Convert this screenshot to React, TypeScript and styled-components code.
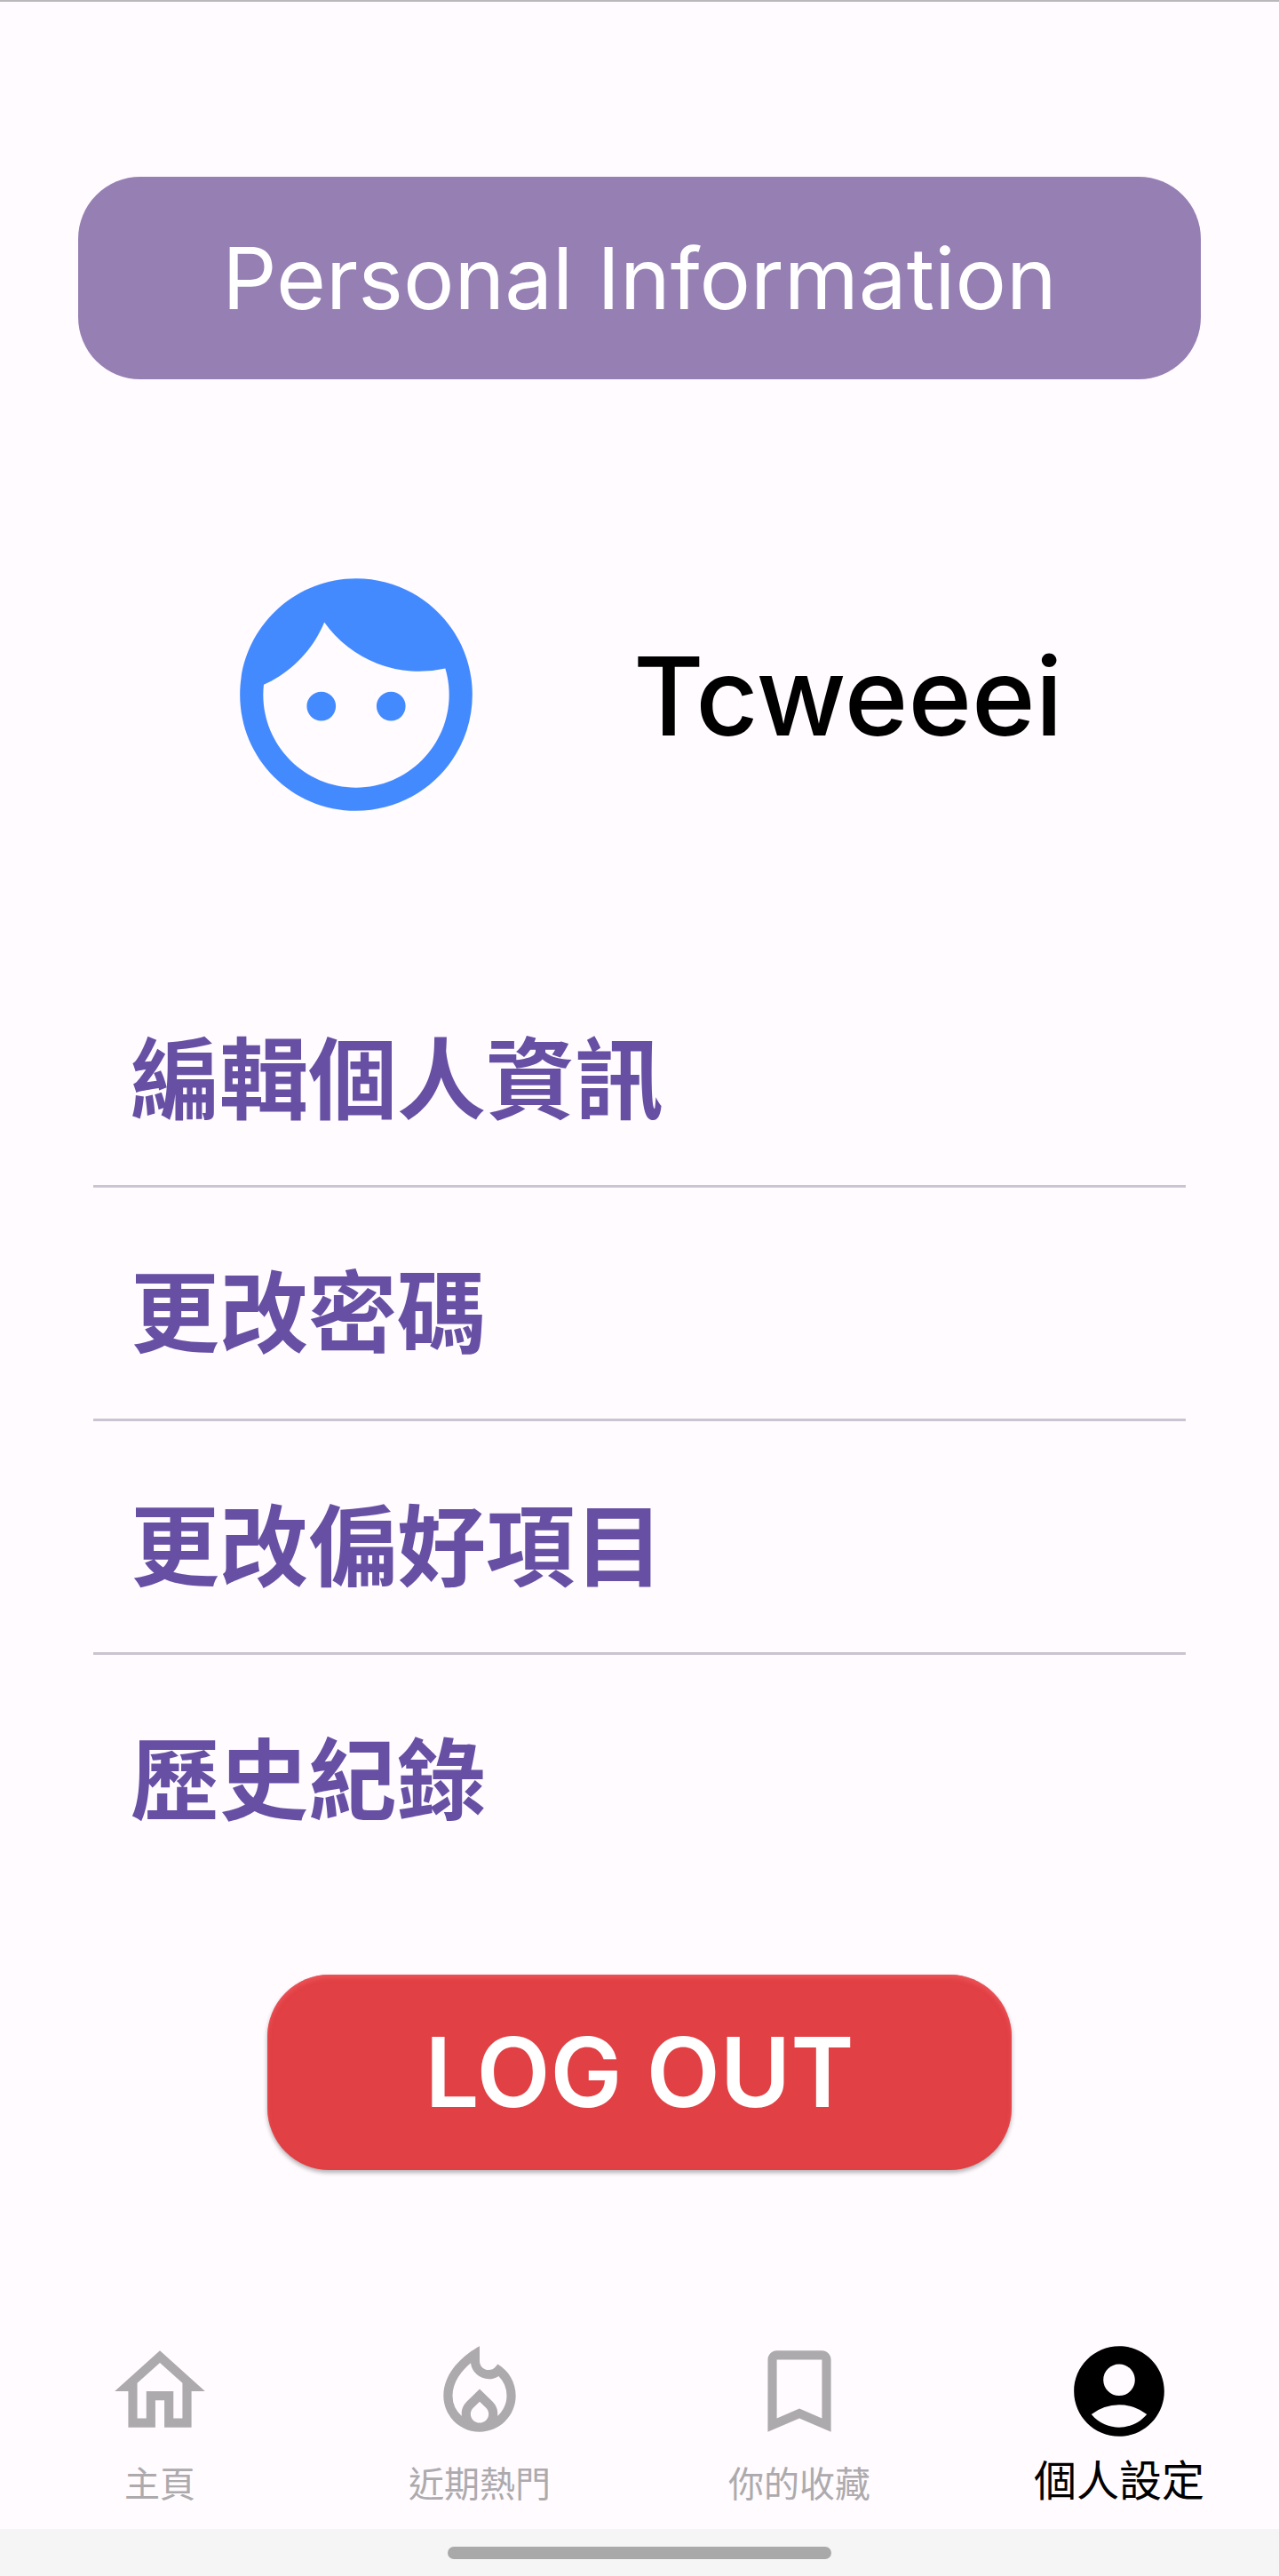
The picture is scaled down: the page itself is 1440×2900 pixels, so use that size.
import React from "react";
import styled, { createGlobalStyle } from "styled-components";
import {
  MdFace,
  MdOutlineHome,
  MdOutlineLocalFireDepartment,
  MdBookmarkBorder,
  MdAccountCircle,
} from "react-icons/md";

const latin = `Inter, "Noto Sans CJK TC", sans-serif`;
const cjk = `"Noto Sans CJK TC", sans-serif`;

const GlobalStyle = createGlobalStyle`
  *, *::before, *::after { box-sizing: border-box; }
  body { margin: 0; background: #fffbff; }
`;

const Screen = styled.div`
  display: flex;
  flex-direction: column;
  min-height: 100vh;
  background: #fffbff;
  border-top: 2px solid #bbb8bb;
  font-family: ${cjk};
`;

const Main = styled.main`
  flex: 1;
  display: flex;
  flex-direction: column;
  padding: 197px 88px 0;
`;

const Banner = styled.header`
  display: flex;
  align-items: center;
  justify-content: center;
  height: 228px;
  border-radius: 70px;
  background: #967fb3;
`;

const Title = styled.h1`
  margin: 0;
  font: 400 96px/120px ${latin};
  color: #fff;
  white-space: nowrap;
`;

const Profile = styled.section`
  display: flex;
  align-items: center;
  justify-content: space-evenly;
  height: 314px;
  margin-top: 198px;
`;

const Avatar = styled(MdFace)`
  flex: none;
  width: 314px;
  height: 314px;
  color: #448aff;
`;

const UserName = styled.p`
  margin: 0;
  padding-top: 4px;
  font: 500 122px/160px ${latin};
  color: #000;
`;

const Menu = styled.ul`
  margin: 135px 0 0;
  padding: 0 17px;
  list-style: none;
`;

const MenuItem = styled.li`
  & + & {
    border-top: 3px solid #cac4d0;
  }
`;

const MenuButton = styled.button`
  display: block;
  width: 100%;
  height: 260px;
  padding: 10px 42px 0;
  border: 0;
  background: none;
  text-align: left;
  font: 700 100px/140px ${cjk};
  color: #6750a4;
  cursor: pointer;
`;

const LogoutButton = styled.button`
  align-self: center;
  width: 838px;
  max-width: 100%;
  height: 220px;
  margin-top: 100px;
  border: 0;
  border-radius: 70px;
  background: #e14044;
  box-shadow: 0 3px 5px rgba(0, 0, 0, 0.3), inset 0 4px 5px rgba(240, 90, 96, 0.7);
  font: 600 108px/140px ${latin};
  color: #fff;
  cursor: pointer;
`;

const Nav = styled.nav`
  display: grid;
  grid-template-columns: repeat(4, 1fr);
  height: 232px;
`;

const NavLink = styled.a<{ $active?: boolean }>`
  display: flex;
  flex-direction: column;
  align-items: center;
  padding-top: 16px;
  text-decoration: none;
  color: ${(p) => (p.$active ? "#000" : "#adaaad")};
  font-size: ${(p) => (p.$active ? 48 : 40)}px;
  line-height: ${(p) => (p.$active ? 72 : 82)}px;

  svg {
    width: 122px;
    height: 122px;
  }
`;

const GestureArea = styled.footer`
  display: flex;
  align-items: center;
  justify-content: center;
  height: 53px;
  background: #f5f5f5;
`;

const GestureHandle = styled.span`
  width: 30%;
  height: 14px;
  border-radius: 7px;
  background: #a9a9a9;
`;

const menuItems = ["編輯個人資訊", "更改密碼", "更改偏好項目", "歷史紀錄"];

const navItems = [
  { label: "主頁", Icon: MdOutlineHome },
  { label: "近期熱門", Icon: MdOutlineLocalFireDepartment },
  { label: "你的收藏", Icon: MdBookmarkBorder },
  { label: "個人設定", Icon: MdAccountCircle, active: true },
];

export default function App() {
  return (
    <Screen lang="zh-Hant">
      <GlobalStyle />
      <Main>
        <Banner>
          <Title>Personal Information</Title>
        </Banner>
        <Profile>
          <Avatar aria-hidden />
          <UserName>Tcweeei</UserName>
        </Profile>
        <Menu>
          {menuItems.map((label) => (
            <MenuItem key={label}>
              <MenuButton type="button">{label}</MenuButton>
            </MenuItem>
          ))}
        </Menu>
        <LogoutButton type="button">LOG OUT</LogoutButton>
      </Main>
      <Nav>
        {navItems.map(({ label, Icon, active }) => (
          <NavLink key={label} href="#" $active={active} aria-current={active ? "page" : undefined}>
            <Icon aria-hidden />
            <span>{label}</span>
          </NavLink>
        ))}
      </Nav>
      <GestureArea>
        <GestureHandle />
      </GestureArea>
    </Screen>
  );
}
